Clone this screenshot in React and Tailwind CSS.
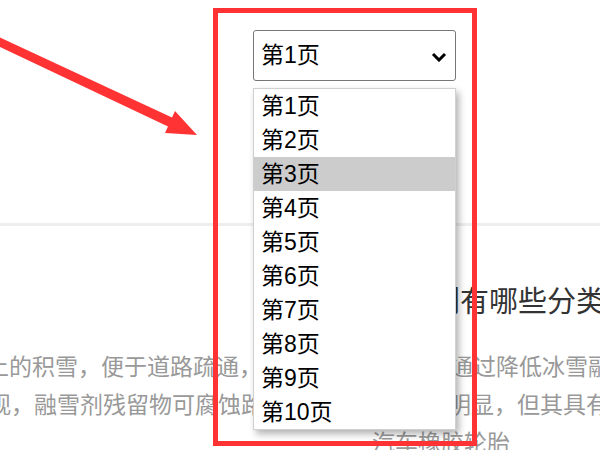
import React from 'react';

const pages = Array.from({ length: 10 }, (_, i) => `第${i + 1}页`);

export default function App() {
  return (
    <div className="relative w-[600px] h-[450px] overflow-hidden bg-white font-['Liberation_Sans','Noto_Sans_CJK_SC',sans-serif]">
      {/* page header with the pager select */}
      <div className="h-[226px] border-b-[3px] border-[#eeeeee] pt-[30px] pl-[253px]">
        <div className="flex items-center justify-between w-[203px] h-[51px] border border-[#767676] rounded-[3px] pl-[7px] pr-[8px] text-[23px] text-black">
          <span>第1页</span>
          <svg width="16" height="10" viewBox="0 0 16 10" className="mt-[2px]">
            <path d="M2 2 L8 8 L14 2" fill="none" stroke="#000" strokeWidth="3" />
          </svg>
        </div>
      </div>

      {/* article teasers */}
      <div className="grid grid-cols-[371px_1fr] text-[23px] leading-[38px] text-[#999999]">
        <div className="pt-[122px] overflow-hidden whitespace-nowrap">
          <div className="-ml-[14px]">上的积雪，便于道路疏通，融雪剂的作用非常大</div>
          <div className="-ml-[12px]">观，融雪剂残留物可腐蚀路面以及桥梁</div>
        </div>
        <div className="whitespace-nowrap">
          <h2 className="mt-[58px] ml-[2px] text-[29px] leading-[36px] text-[#333333]">融雪剂有哪些分类</h2>
          <div className="mt-[28px]">
            <div className="ml-[10px]">融雪剂通过降低冰雪融化的温度</div>
            <div className="ml-[8px]">的效果明显，但其具有腐蚀性</div>
            <div className="ml-[1px]">汽车橡胶轮胎</div>
          </div>
        </div>
      </div>

      {/* opened options list */}
      <div className="absolute left-[253px] top-[88px] w-[203px] border border-[#d0d0d0] bg-white shadow-[3px_4px_7px_rgba(0,0,0,0.3)] text-[23px] text-black">
        {pages.map((p, i) => (
          <div key={p} className={`h-[34px] flex items-center pl-[7px] ${i === 2 ? 'bg-[#cccccc]' : ''}`}>
            {p}
          </div>
        ))}
      </div>

      {/* annotation */}
      <svg className="absolute left-0 top-0" width="210" height="150" viewBox="0 0 210 150">
        <polygon points="0,37.5 172,117.5 175,111 197,135 165,133 168,126.5 0,47" fill="#ff3333" />
      </svg>
      <div className="absolute left-[213px] top-[8px] w-[264px] h-[438px] border-[5px] border-[#ff3333] pointer-events-none" />
    </div>
  );
}
